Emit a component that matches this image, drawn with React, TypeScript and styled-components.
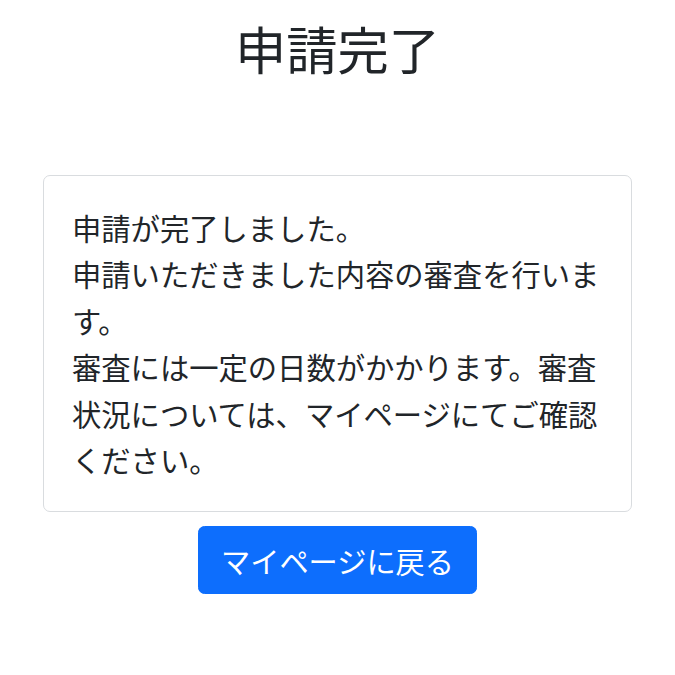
import React from "react";
import styled, { createGlobalStyle } from "styled-components";

const Global = createGlobalStyle`
  html, body { margin: 0; padding: 0; background: #fff; }
  body {
    font-family: "Noto Sans CJK JP", "Noto Sans", sans-serif;
    color: #212529;
  }
`;

const Page = styled.main`
  padding: 0 43px;
  display: flex;
  flex-direction: column;
  align-items: stretch;
`;

const Title = styled.h1`
  margin: 17px 0 0;
  font-size: 51.3px;
  line-height: 61.5px;
  font-weight: 400;
  text-align: center;
`;

const Card = styled.section`
  margin-top: 96px;
  border: 1px solid #d9dcdf;
  border-radius: 7px;
  padding: 28px 26px 28px 28px;
`;

const Message = styled.p`
  margin: 0;
  font-size: 29.3px;
  line-height: 46.5px;
`;

const Actions = styled.div`
  display: flex;
  justify-content: center;
  margin-top: 14px;
`;

const Button = styled.button`
  font-family: inherit;
  font-size: 29.2px;
  line-height: 44px;
  padding: 11px 22px;
  color: #fff;
  background: #0d6efd;
  border: 1px solid #0d6efd;
  border-radius: 6.5px;
  cursor: pointer;
`;

export default function App() {
  return (
    <>
      <Global />
      <Page>
        <Title>申請完了</Title>
        <Card>
          <Message>
            申請が完了しました。
            <br />
            申請いただきました内容の審査を行います。
            <br />
            審査には一定の日数がかかります。審査状況については、マイページにてご確認ください。
          </Message>
        </Card>
        <Actions>
          <Button type="button">マイページに戻る</Button>
        </Actions>
      </Page>
    </>
  );
}
